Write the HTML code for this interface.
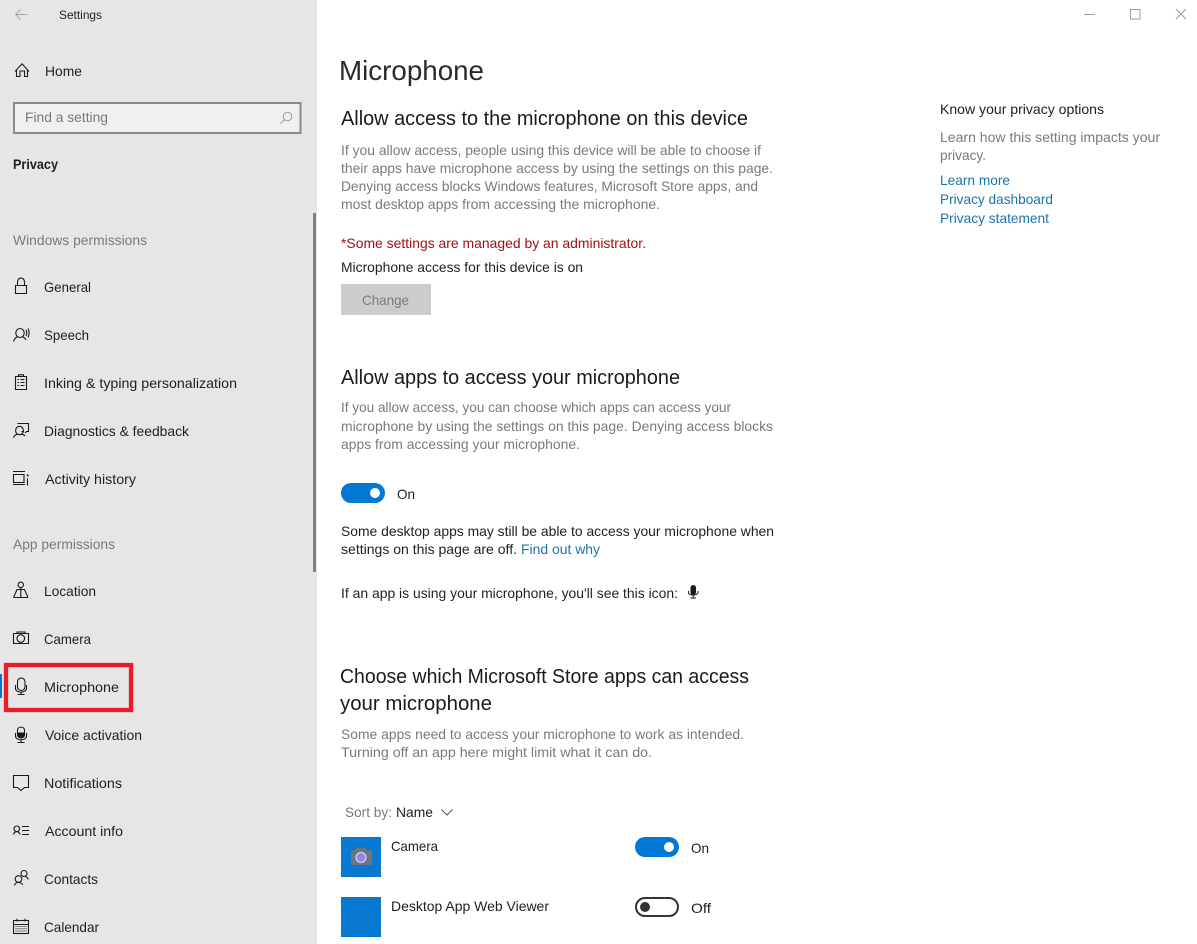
<!DOCTYPE html>
<html lang="en"><head><meta charset="utf-8"><title>Settings - Microphone</title>
<style>
html,body{margin:0;padding:0;background:#fff;overflow:hidden}
svg{display:block}
text{font-family:"Liberation Sans",sans-serif;font-size:14px;fill:#1f1f1f}
.g{fill:#7a7a7a}
.l{fill:#1b75a8}
.h{font-size:20px;fill:#1a1a1a}
.i{fill:none;stroke:#1a1a1a;stroke-width:1.1}
</style></head><body>
<svg width="1197" height="944" viewBox="0 0 1197 944" xmlns="http://www.w3.org/2000/svg">
<rect width="1197" height="944" fill="#fff"/>
<rect width="317" height="944" fill="#e6e6e6"/>
<rect x="313" y="213" width="3" height="359" fill="#7f7f7f"/>

<!-- title bar -->
<path d="M15.500 14.500H27.500M15.500 14.500L20.500 9.500M15.500 14.500L20.500 19.500" fill="none" stroke="#a6a6a6" stroke-width="1"/>
<text x="59" y="19" textLength="43" lengthAdjust="spacingAndGlyphs" style="font-size:12px">Settings</text>
<path d="M1084 14.500H1095" stroke="#9a9a9a" stroke-width="1"/>
<rect x="1130.500" y="9.500" width="9.500" height="9.500" fill="none" stroke="#9a9a9a"/>
<path d="M1176 9L1186 19M1186 9L1176 19" stroke="#9a9a9a" stroke-width="1"/>

<!-- home + search -->
<path class="i" d="M15 71.500L22 63.800L29 71.500M16.500 70V76.500H20V71H24.500V76.500H27.500V70"/>
<text x="45" y="76" textLength="37" lengthAdjust="spacingAndGlyphs">Home</text>
<rect x="14" y="103" width="286.500" height="30" fill="#f0f0f0" stroke="#8a8a8a" stroke-width="2"/>
<text class="g" x="25" y="122" textLength="83" lengthAdjust="spacingAndGlyphs">Find a setting</text>
<circle cx="287.500" cy="116.500" r="4.300" fill="none" stroke="#9a9a9a"/>
<path d="M284.500 119.800L280.500 123.500" stroke="#9a9a9a"/>
<text x="13" y="169" textLength="45" lengthAdjust="spacingAndGlyphs" font-weight="700">Privacy</text>

<text class="g" x="13" y="245" textLength="134" lengthAdjust="spacingAndGlyphs">Windows permissions</text>
<text x="44" y="292" textLength="47" lengthAdjust="spacingAndGlyphs">General</text>
<text x="44" y="340" textLength="45" lengthAdjust="spacingAndGlyphs">Speech</text>
<text x="44" y="388" textLength="193" lengthAdjust="spacingAndGlyphs">Inking &amp; typing personalization</text>
<text x="44" y="436" textLength="145" lengthAdjust="spacingAndGlyphs">Diagnostics &amp; feedback</text>
<text x="45" y="484" textLength="91" lengthAdjust="spacingAndGlyphs">Activity history</text>
<text class="g" x="13" y="549" textLength="102" lengthAdjust="spacingAndGlyphs">App permissions</text>
<text x="44" y="596" textLength="52" lengthAdjust="spacingAndGlyphs">Location</text>
<text x="44" y="644" textLength="47" lengthAdjust="spacingAndGlyphs">Camera</text>
<text x="44" y="692" textLength="75" lengthAdjust="spacingAndGlyphs">Microphone</text>
<text x="45" y="740" textLength="97" lengthAdjust="spacingAndGlyphs">Voice activation</text>
<text x="44" y="788" textLength="78" lengthAdjust="spacingAndGlyphs">Notifications</text>
<text x="45" y="836" textLength="78" lengthAdjust="spacingAndGlyphs">Account info</text>
<text x="44" y="884" textLength="54" lengthAdjust="spacingAndGlyphs">Contacts</text>
<text x="44" y="932" textLength="55" lengthAdjust="spacingAndGlyphs">Calendar</text>

<!-- sidebar icons -->
<g class="i">
<!-- general -->
<path d="M15.500 285.500H26.500V293.500H15.500ZM17.500 285.500V282C17.500 276.800 24.500 276.800 24.500 282V285.500"/>
<!-- speech -->
<ellipse cx="20" cy="333" rx="4.200" ry="4.500"/><path d="M13.500 341.500C14.500 338.500 16 337 18 336.800M22 336.800C24 337 25 338 26 340"/><path d="M26 330C27 332 27 334 26 336M28 328.500C29.500 331 29.500 335 28 337.500"/>
<!-- inking -->
<path d="M15.500 376.500H26.500V389.500H15.500ZM18.500 376.500V374.800H23.500V376.500"/><path d="M20.500 379.500H24.500M20.500 382.500H24.500M20.500 385.500H24.500M17.500 379.500H19M17.500 382.500H19M17.500 385.500H19" stroke-width="1"/>
<!-- diagnostics -->
<ellipse cx="19.500" cy="430.500" rx="3.900" ry="4.200"/><path d="M13.500 437.800C14.300 435.500 15.800 434.300 17.500 434.200M21.500 434.200C23.300 434.300 24.300 435 25 436"/><path d="M17.500 423.500H28.500V431.500H26.500L25 433M24 431.500H21.500"/>
<!-- activity -->
<path d="M13 471.500H25M13.500 474.500H24V482.500H13.500ZM13 484.500H25"/><path d="M27.500 478.500V485.500"/>
<!-- location -->
<circle cx="20.800" cy="584.800" r="2.700"/><path d="M20.800 587.500V597M13.500 597.500H28M13.500 597.500L17 589.500H24.500L28 597.500"/>
<!-- camera -->
<path d="M13.500 633.500H28.500V643.500H13.500ZM17 633.500V632H25V633.500"/><circle cx="20.800" cy="638.500" r="3.800"/>
<!-- microphone -->
<rect x="17.500" y="678" width="7.500" height="12.500" rx="3.700"/><path d="M15.500 685V688.500C15.500 693.300 26.500 693.300 26.500 688.500V685M21 692V694.300M17.500 694.500H24.500"/>
<!-- notifications -->
<path d="M13.500 775.500H28.500V787.500H24.500L21 790.500L17.500 787.500H13.500Z"/>
<!-- account -->
<circle cx="16.800" cy="828.800" r="2.800"/><path d="M13.500 834.500C14 832.500 15 831.700 16.800 831.700C18.500 831.700 19.500 832.500 20 834.500"/><path d="M22 826.500H29M22 830.500H29M22 834.500H29"/>
<!-- contacts -->
<circle cx="24" cy="873.500" r="3"/><circle cx="18.500" cy="879" r="3.300"/><path d="M14.500 885.500C15 883.300 16 882.500 18.500 882.500C21 882.500 22 883.300 22.500 885M25.500 876.500C27 877 27.800 878 28.300 879.500"/>
<!-- calendar -->
<rect x="13.500" y="920.500" width="15" height="13"/><path d="M13.500 924.500H28.500M17 918.800V921.500M25 918.800V921.500"/><path d="M15.500 926.500H26.500M15.500 928.800H26.500M15.500 931H26.500" stroke-dasharray="1 1" stroke-width="1"/>
</g>
<rect x="26.800" y="474.500" width="1.800" height="1.800" fill="#1a1a1a"/>
<!-- voice activation -->
<path d="M17.500 733V730.500C17.500 726 24.500 726 24.500 730.500V733Z" fill="none" stroke="#1a1a1a" stroke-width="1.100"/>
<path d="M17 733H25V735C25 739.500 17 739.500 17 735Z" fill="#1a1a1a"/>
<path d="M15.500 733V736C15.500 741 26.500 741 26.500 736V733M21 740V742M17.500 742.500H24.500" fill="none" stroke="#1a1a1a" stroke-width="1.100"/>

<!-- selection + highlight -->
<rect x="0" y="674" width="2" height="24" fill="#0078d4"/>
<rect x="6" y="665" width="125" height="45" fill="none" stroke="#e81c2c" stroke-width="4.300"/>

<!-- main column -->
<text x="339" y="80" textLength="145" lengthAdjust="spacingAndGlyphs" style="font-size:28px;fill:#2a2a2a">Microphone</text>
<text class="h" x="341" y="125" textLength="407" lengthAdjust="spacingAndGlyphs">Allow access to the microphone on this device</text>
<text class="g" x="341" y="155" textLength="420" lengthAdjust="spacingAndGlyphs">If you allow access, people using this device will be able to choose if</text>
<text class="g" x="341" y="173" textLength="432" lengthAdjust="spacingAndGlyphs">their apps have microphone access by using the settings on this page.</text>
<text class="g" x="341" y="191" textLength="417" lengthAdjust="spacingAndGlyphs">Denying access blocks Windows features, Microsoft Store apps, and</text>
<text class="g" x="341" y="209" textLength="319" lengthAdjust="spacingAndGlyphs">most desktop apps from accessing the microphone.</text>
<text x="341" y="248" textLength="305" lengthAdjust="spacingAndGlyphs" style="fill:#a01010">*Some settings are managed by an administrator.</text>
<text x="341" y="272" textLength="242" lengthAdjust="spacingAndGlyphs">Microphone access for this device is on</text>
<rect x="341" y="284" width="90" height="31" fill="#ccc"/>
<text x="362" y="305" textLength="47" lengthAdjust="spacingAndGlyphs" style="fill:#7a7a7a">Change</text>

<text class="h" x="341" y="384" textLength="339" lengthAdjust="spacingAndGlyphs">Allow apps to access your microphone</text>
<text class="g" x="341" y="412" textLength="390" lengthAdjust="spacingAndGlyphs">If you allow access, you can choose which apps can access your</text>
<text class="g" x="341" y="431" textLength="432" lengthAdjust="spacingAndGlyphs">microphone by using the settings on this page. Denying access blocks</text>
<text class="g" x="341" y="449" textLength="239" lengthAdjust="spacingAndGlyphs">apps from accessing your microphone.</text>
<rect x="341" y="483" width="44" height="20" rx="10" fill="#0078d4"/>
<circle cx="375" cy="493" r="5" fill="#fff"/>
<text x="397" y="499" textLength="18" lengthAdjust="spacingAndGlyphs">On</text>
<text x="341" y="536" textLength="433" lengthAdjust="spacingAndGlyphs">Some desktop apps may still be able to access your microphone when</text>
<text x="341" y="554" textLength="176" lengthAdjust="spacingAndGlyphs">settings on this page are off.</text>
<text class="l" x="521" y="554" textLength="79" lengthAdjust="spacingAndGlyphs">Find out why</text>
<text x="341" y="598" textLength="337" lengthAdjust="spacingAndGlyphs">If an app is using your microphone, you'll see this icon:</text>
<rect x="690.500" y="585" width="5.500" height="10" rx="2.700" fill="#1a1a1a"/>
<path d="M688.500 591V592.500C688.500 596 698 596 698 592.500V591M693.200 595.500V598M690.500 598H696" fill="none" stroke="#1a1a1a"/>

<text class="h" x="340" y="683" textLength="409" lengthAdjust="spacingAndGlyphs">Choose which Microsoft Store apps can access</text>
<text class="h" x="340" y="710" textLength="152" lengthAdjust="spacingAndGlyphs">your microphone</text>
<text class="g" x="341" y="739" textLength="403" lengthAdjust="spacingAndGlyphs">Some apps need to access your microphone to work as intended.</text>
<text class="g" x="341" y="757" textLength="311" lengthAdjust="spacingAndGlyphs">Turning off an app here might limit what it can do.</text>
<text class="g" x="345" y="817" textLength="47" lengthAdjust="spacingAndGlyphs">Sort by:</text>
<text x="396" y="817" textLength="37" lengthAdjust="spacingAndGlyphs">Name</text>
<path d="M441.500 809.500L447 815L452.500 809.500" fill="none" stroke="#555" stroke-width="1"/>

<rect x="341" y="837" width="40" height="40" fill="#0b78d0"/>
<rect x="351" y="850" width="21" height="15" rx="1.500" fill="#6b7480"/>
<rect x="356" y="848" width="10" height="3" fill="#6b7480"/>
<circle cx="361" cy="857.500" r="5" fill="#8f83ee" stroke="#e4e4f4" stroke-width="1"/>
<text x="391" y="851" textLength="47" lengthAdjust="spacingAndGlyphs">Camera</text>
<rect x="635" y="837" width="44" height="20" rx="10" fill="#0078d4"/>
<circle cx="669" cy="847" r="5" fill="#fff"/>
<text x="691" y="853" textLength="18" lengthAdjust="spacingAndGlyphs">On</text>

<rect x="341" y="897" width="40" height="40" fill="#0b78d0"/>
<text x="391" y="911" textLength="158" lengthAdjust="spacingAndGlyphs">Desktop App Web Viewer</text>
<rect x="636" y="898" width="42" height="18" rx="9" fill="#fff" stroke="#333" stroke-width="2"/>
<circle cx="645" cy="907" r="5" fill="#333"/>
<text x="691" y="913" textLength="20" lengthAdjust="spacingAndGlyphs">Off</text>

<!-- right column -->
<text x="940" y="114" textLength="164" lengthAdjust="spacingAndGlyphs">Know your privacy options</text>
<text class="g" x="940" y="142" textLength="220" lengthAdjust="spacingAndGlyphs">Learn how this setting impacts your</text>
<text class="g" x="940" y="160" textLength="46" lengthAdjust="spacingAndGlyphs">privacy.</text>
<text class="l" x="940" y="185" textLength="70" lengthAdjust="spacingAndGlyphs">Learn more</text>
<text class="l" x="940" y="204" textLength="113" lengthAdjust="spacingAndGlyphs">Privacy dashboard</text>
<text class="l" x="940" y="223" textLength="109" lengthAdjust="spacingAndGlyphs">Privacy statement</text>
</svg>
</body></html>
